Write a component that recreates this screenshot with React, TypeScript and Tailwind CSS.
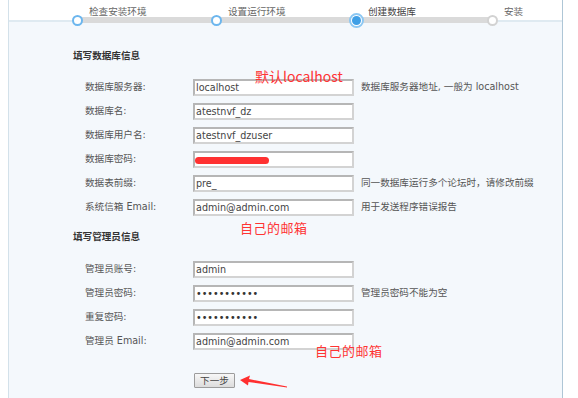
import React from "react";

type Row = {
  label: string;
  value?: string;
  hint?: string;
  secret?: boolean;
  redacted?: boolean;
};

const dbRows: Row[] = [
  { label: "数据库服务器:", value: "localhost", hint: "数据库服务器地址, 一般为 localhost" },
  { label: "数据库名:", value: "atestnvf_dz" },
  { label: "数据库用户名:", value: "atestnvf_dzuser" },
  { label: "数据库密码:", value: "", redacted: true },
  { label: "数据表前缀:", value: "pre_", hint: "同一数据库运行多个论坛时，请修改前缀" },
  { label: "系统信箱 Email:", value: "admin@admin.com", hint: "用于发送程序错误报告" },
];

const adminRows: Row[] = [
  { label: "管理员账号:", value: "admin" },
  { label: "管理员密码:", value: "•••••••••••", secret: true, hint: "管理员密码不能为空" },
  { label: "重复密码:", value: "•••••••••••", secret: true },
  { label: "管理员 Email:", value: "admin@admin.com" },
];

const steps = [
  { name: "检查安装环境", state: "done", width: "w-[139px]" },
  { name: "设置运行环境", state: "done", width: "w-[138px]" },
  { name: "创建数据库", state: "active", width: "w-[138px]" },
  { name: "安装", state: "todo", width: "w-[40px]" },
];

function FormRow({ row }: { row: Row }) {
  return (
    <div className="flex items-center h-[24px]">
      <div className="w-[108px] text-[#555]">{row.label}</div>
      <div className="relative flex items-center w-[161px] h-[17px] pl-[1px] bg-white border-2 border-[#d3d3d3] border-t-[#b6b6b6] border-l-[#b6b6b6]">
        <span className={row.secret ? "text-[#333] leading-[13px] whitespace-nowrap" : "text-[#444] leading-[13px] whitespace-nowrap"}>
          {row.value}
        </span>
        {row.redacted && (
          <div className="absolute left-[0px] top-[4px] w-[74px] h-[7px] rounded-full bg-[#ff3131]" />
        )}
      </div>
      {row.hint && <div className="ml-[7px] text-[#555] whitespace-nowrap">{row.hint}</div>}
    </div>
  );
}

function Stepper() {
  return (
    <div className="absolute left-[63px] top-[6px] h-[22px]">
      <div className="absolute left-[5px] top-[11px] w-[415px] h-[6px] bg-[#dadada]" />
      <div className="relative flex">
        {steps.map((s) => (
          <div key={s.name} className={`${s.width} flex items-start`}>
            {s.state === "active" ? (
              <div className="mt-[7px] w-[15px] h-[15px] rounded-full border-2 border-[#8cc7f2] bg-white flex items-center justify-center">
                <div className="w-[9px] h-[9px] rounded-full bg-[#3f9fe6]" />
              </div>
            ) : (
              <div
                className={
                  s.state === "done"
                    ? "mt-[9px] w-[11px] h-[11px] rounded-full border-2 border-[#6cb6ee] bg-white"
                    : "mt-[9px] w-[11px] h-[11px] rounded-full border-2 border-[#d2d2d2] bg-white"
                }
              />
            )}
            <div
              className={
                s.state === "active"
                  ? "ml-[4px] leading-[12px] text-[#444] whitespace-nowrap"
                  : "ml-[6px] leading-[12px] text-[#666] whitespace-nowrap"
              }
            >
              {s.name}
            </div>
          </div>
        ))}
      </div>
    </div>
  );
}

export default function App() {
  return (
    <div className="relative w-[578px] h-[398px] bg-white overflow-hidden font-['DejaVu_Sans','Noto_Sans_CJK_SC',sans-serif] text-[9.6px]">
      <div className="relative ml-[8px] w-[555px] h-full flex flex-col border-l border-r border-l-[#d3e1ea] border-r-[#aec6d6]">
        <div className="h-[20px] bg-white" />
        <div className="flex-1 bg-[#f4f8fc] border-t-2 border-[#dfeaf1] pl-[64px] pt-[27px]">
          <div className="h-[14px] leading-[14px] font-bold text-[#333]">填写数据库信息</div>
          <div className="ml-[12px] mt-[12px]">
            {dbRows.map((r) => (
              <FormRow key={r.label} row={r} />
            ))}
          </div>

          <div className="mt-[11px] h-[14px] leading-[14px] font-bold text-[#333]">填写管理员信息</div>
          <div className="ml-[12px] mt-[13px]">
            {adminRows.map((r) => (
              <FormRow key={r.label} row={r} />
            ))}
          </div>

          <button className="ml-[121px] mt-[20px] w-[41px] h-[15px] border border-[#9c9c9c] bg-gradient-to-b from-[#f7f7f7] to-[#dcdcdc] text-[#444] leading-[13px] rounded-[1px]">
            下一步
          </button>
        </div>
        <Stepper />
      </div>

      {/* red annotations */}
      <div className="absolute left-[255px] top-[67px] text-[14px] leading-[18px] text-[#ff3434] font-['Noto_Sans_CJK_SC',sans-serif]">
        默认localhost
      </div>
      <div className="absolute left-[240px] top-[219px] text-[13px] leading-[18px] tracking-[0.5px] text-[#ff3434] font-['Noto_Sans_CJK_SC',sans-serif]">
        自己的邮箱
      </div>
      <div className="absolute left-[315px] top-[342px] text-[13px] leading-[18px] tracking-[0.5px] text-[#ff3434] font-['Noto_Sans_CJK_SC',sans-serif]">
        自己的邮箱
      </div>
      <svg className="absolute left-[236px] top-[372px]" width="56" height="20" viewBox="0 0 56 20">
        <polygon points="4,8 14,3.5 13,7 51,14.5 51,15.5 12.5,10 12,13.5" fill="#ff2f2f" />
      </svg>
    </div>
  );
}
